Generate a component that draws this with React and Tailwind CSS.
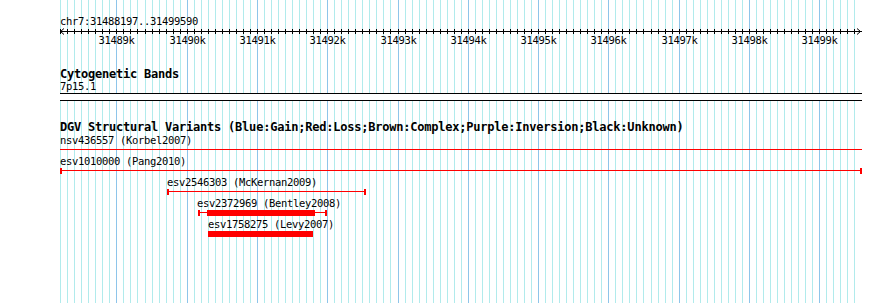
import React from 'react';

const START = 31488197;
const END = 31499590;
// pixel x for a genome position (1kb ~ 70.3px, 31489k sits at x=116)
const xOf = (pos) => 116.4 + (pos - 31489000) * 0.07028;

const gridPositions = [];
for (let p = 31488200; p <= 31499500; p += 100) gridPositions.push(p);
const majorLabels = [];
for (let p = 31489000; p <= 31499000; p += 1000) majorLabels.push(p);

function Grid() {
  return (
    <svg className="absolute inset-0" width="890" height="303" shapeRendering="crispEdges">
      {gridPositions.map((p) => {
        const x = Math.round(xOf(p)) + 0.5;
        const major = p % 1000 === 0;
        return (
          <line key={p} x1={x} x2={x} y1="0" y2="303" stroke={major ? '#8ec5ea' : '#b1ebec'} strokeWidth="1" />
        );
      })}
    </svg>
  );
}

function Ruler() {
  return (
    <svg width="890" height="18" className="block" shapeRendering="crispEdges">
      <rect x="60" y="3" width="802" height="1" fill="#000" />
      {gridPositions.map((p) => {
        const x = Math.round(xOf(p)) + 0.5;
        return <line key={p} x1={x} x2={x} y1="1" y2="6" stroke="#000" strokeWidth="1" />;
      })}
      <polyline points="64,0.5 60.5,3.5 64,6.5" fill="none" stroke="#000" strokeWidth="1" shapeRendering="auto" />
      <polyline points="857,0.5 860.5,3.5 857,6.5" fill="none" stroke="#000" strokeWidth="1" shapeRendering="auto" />
      {majorLabels.map((p) => (
        <text
          key={p}
          x={Math.round(xOf(p)) + 0.5}
          y="16"
          textAnchor="middle"
          className="font-['DejaVu_Sans_Mono',monospace] text-[10.5px] tracking-[-0.32px]"
        >
          {Math.round(p / 1000)}k
        </text>
      ))}
    </svg>
  );
}

function Label({ children, className = '' }) {
  return (
    <div className={`h-[13px] leading-[13px] text-[10.5px] tracking-[-0.32px] text-black whitespace-nowrap ${className}`}>
      {children}
    </div>
  );
}

function Cap() {
  return <div className="w-[2px] h-[6px] bg-[#ff0000] shrink-0" />;
}

function Line({ className = '' }) {
  return <div className={`h-px mt-[2px] bg-[#ff0000] ${className}`} />;
}

export default function App() {
  return (
    <div className="relative w-[890px] h-[303px] overflow-hidden bg-white font-['DejaVu_Sans_Mono',monospace]">
      <Grid />

      <div className="relative flex flex-col">
        {/* Overview ruler */}
        <Label className="mt-[15px] ml-[60px]">chr7:{START}..{END}</Label>
        <Ruler />

        {/* Cytogenetic bands */}
        <div className="mt-[22px] ml-[60px] h-[12px] leading-[12px] text-[12px] font-bold tracking-[-0.22px] whitespace-nowrap">
          Cytogenetic Bands
        </div>
        <Label className="ml-[60px]">7p15.1</Label>
        <div className="ml-[60px] w-[802px] h-[8px] bg-white border-y border-black" />

        {/* DGV structural variants */}
        <div className="mt-[20px] ml-[60px] h-[13px] leading-[12px] text-[12px] font-bold tracking-[-0.22px] whitespace-nowrap">
          DGV Structural Variants (Blue:Gain;Red:Loss;Brown:Complex;Purple:Inversion;Black:Unknown)
        </div>

        <Label className="ml-[60px]">nsv436557 (Korbel2007)</Label>
        <div className="h-[8px]">
          <Line className="ml-[60px] w-[802px]" />
        </div>

        <Label className="ml-[60px]">esv1010000 (Pang2010)</Label>
        <div className="h-[8px] ml-[60px] w-[802px] flex items-start">
          <Cap />
          <Line className="flex-1" />
          <Cap />
        </div>

        <Label className="ml-[167px]">esv2546303 (McKernan2009)</Label>
        <div className="h-[8px] ml-[167px] w-[199px] flex items-start">
          <Cap />
          <Line className="flex-1" />
          <Cap />
        </div>

        <Label className="ml-[197px]">esv2372969 (Bentley2008)</Label>
        <div className="h-[8px] ml-[198px] w-[129px] flex items-start">
          <Cap />
          <Line className="w-[7px]" />
          <div className="w-[108px] h-[6px] bg-[#ff0000] shrink-0" />
          <Line className="w-[10px]" />
          <Cap />
        </div>

        <Label className="ml-[208px]">esv1758275 (Levy2007)</Label>
        <div className="h-[8px]">
          <div className="ml-[208px] w-[105px] h-[6px] bg-[#ff0000]" />
        </div>
      </div>
    </div>
  );
}
